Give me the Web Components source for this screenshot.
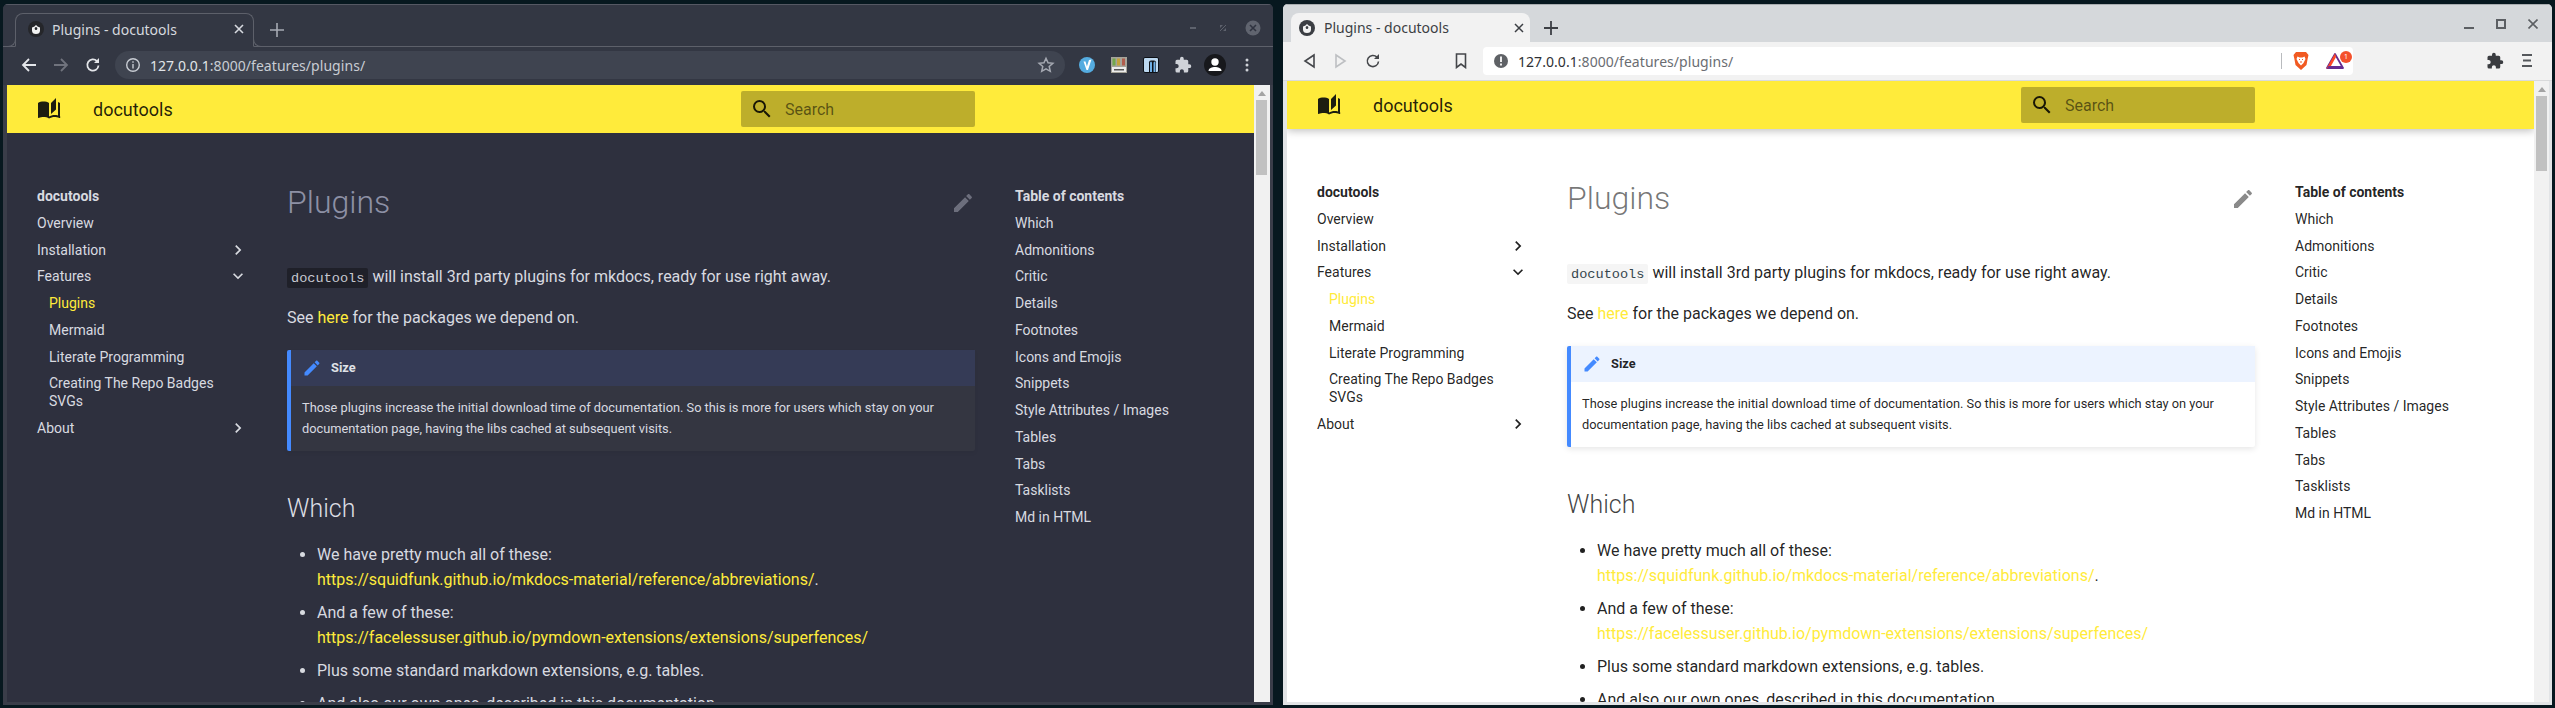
<!doctype html>
<html>
<head>
<meta charset="utf-8">
<title>Plugins - docutools</title>
<style>
  html, body { margin: 0; height: 100%; background: #07181f; overflow: hidden; }
  body { position: relative; width: 2555px; height: 708px; font-family: Roboto, sans-serif; }
</style>
</head>
<body>

<browser-window theme="dark" style="left:3px;top:4px;width:1270px;height:701px">
  <chrome-bar theme="dark"></chrome-bar>
  <docs-page theme="dark"></docs-page>
</browser-window>

<browser-window theme="light" style="left:1283px;top:4px;width:1269px;height:701px">
  <chrome-bar theme="light"></chrome-bar>
  <docs-page theme="light"></docs-page>
</browser-window>

<script>
const ICONS = {
  book: 'M19 1l-5 5v11l5-4.5V1M1 6v14.6c0 .25.25.5.5.5.1 0 .15-.07.25-.07C3.1 20.4 5.05 20 6.5 20c1.95 0 4.05.4 5.5 1.5V6c-1.45-1.1-3.55-1.5-5.5-1.5S2.45 4.9 1 6m22 13.5V6c-.6-.45-1.25-.75-2-1v13.5c-1.1-.35-2.3-.5-3.5-.5-1.7 0-4.15.65-5.5 1.5v2c1.35-.85 3.8-1.5 5.5-1.5 1.65 0 3.35.3 4.75 1.05.1.05.15.05.25.05h.25c.25 0 .5-.25.5-.5v-1.1z',
  search: 'M9.5 3A6.5 6.5 0 0 1 16 9.5c0 1.61-.59 3.09-1.56 4.23l.27.27h.79l5 5-1.5 1.5-5-5v-.79l-.27-.27A6.516 6.516 0 0 1 9.5 16 6.5 6.5 0 0 1 3 9.5 6.5 6.5 0 0 1 9.5 3m0 2C7 5 5 7 5 9.5S7 14 9.5 14 14 12 14 9.5 12 5 9.5 5z',
  pencil: 'M20.71 7.04c.39-.39.39-1.04 0-1.41l-2.34-2.34c-.37-.39-1.02-.39-1.41 0l-1.84 1.83 3.75 3.75M3 17.25V21h3.75L17.81 9.93l-3.75-3.75L3 17.25z',
  right: 'M8.59 16.58L13.17 12 8.59 7.41 10 6l6 6-6 6z',
  down: 'M7.41 8.58L12 13.17l4.59-4.59L18 10l-6 6-6-6z',
  puzzle: 'M20.5 11H19V7a2 2 0 0 0-2-2h-4V3.5a2.5 2.5 0 0 0-5 0V5H4a2 2 0 0 0-2 2v3.8h1.5c1.5 0 2.7 1.2 2.7 2.7S5 16.2 3.5 16.2H2V20a2 2 0 0 0 2 2h3.8v-1.5c0-1.5 1.2-2.7 2.7-2.7s2.7 1.2 2.7 2.7V22H17a2 2 0 0 0 2-2v-4h1.5a2.5 2.5 0 0 0 0-5z'
};
const svg = (name, size, fill) =>
  `<svg width="${size}" height="${size}" viewBox="0 0 24 24" fill="${fill || 'currentColor'}"><path d="${ICONS[name]}"/></svg>`;
const favicon = (bg, fg) =>
  `<svg width="16" height="16" viewBox="0 0 16 16"><circle cx="8" cy="8" r="8" fill="${bg}"/><path d="M4 6.5l2.500-1Q8 3 9.500 5.500l2.500 1v3Q12 13 8 13t-4-3.500z" fill="${fg}"/><ellipse cx="8" cy="7.500" rx="1.300" ry="1.500" fill="${bg}"/></svg>`;

class BrowserWindow extends HTMLElement {
  constructor() {
    super();
    this.attachShadow({ mode: 'open' });
    const dark = this.getAttribute('theme') === 'dark';
    this.shadowRoot.innerHTML = `
      <style>
        :host { position: absolute; display: flex; flex-direction: column; overflow: hidden;
                box-sizing: border-box; border-radius: 5px 5px 0 0;
                background: ${dark ? '#3a3d49' : '#e2e4e6'};
                padding: 0 3px 3px 4px; }
      </style>
      <slot></slot>`;
  }
}

class ChromeBar extends HTMLElement {
  constructor() {
    super();
    this.attachShadow({ mode: 'open' });
    this.dark = this.getAttribute('theme') === 'dark';
    this.render();
  }

  render() {
    const dark = this.dark;
    const fg = dark ? '#e4e6ea' : '#45474b';
    const line = '#5d606a';
    const chrome = dark ? '#333743' : '#d5d8db';
    this.shadowRoot.innerHTML = `
      <style>
        :host { display: block; margin: 0 -3px 0 -4px; font-family: "Noto Sans", "Open Sans", sans-serif; flex: none; }
        .strip { height: ${dark ? 43 : 38}px; box-sizing: border-box; position: relative; padding-top: 9px; padding-left: ${dark ? 12 : 8}px;
                 display: flex; background: ${chrome}; box-shadow: inset 0 1px ${dark ? '#555863' : '#a9adb0'};
                 ${dark ? `border-bottom: 1px solid ${line};` : ''} }
        .tab { box-sizing: border-box; width: 239px; height: ${dark ? 34 : 29}px; display: flex; align-items: center; position: relative;
               font-size: 14px; color: ${dark ? '#d6d9df' : '#3c3f44'};
               background: ${dark ? '#333743' : '#f2f2f2'}; border-radius: 8px 8px 0 0;
               ${dark ? `border: 1px solid ${line}; border-bottom-color: #333743;` : ''}
               padding: ${dark ? '0 8px 2px 12px' : '0 5px 0 8px'}; }
        ${dark ? `
        .tab::before, .tab::after { content: ""; position: absolute; bottom: -1px; width: 8px; height: 8px; border-bottom: 1px solid ${line}; }
        .tab::before { left: -9px; border-right: 1px solid ${line}; border-bottom-right-radius: 8px; }
        .tab::after { right: -9px; border-left: 1px solid ${line}; border-bottom-left-radius: 8px; }` : ''}
        .tab .fav { flex: none; margin-right: ${dark ? 8 : 9}px; display: flex; }
        .tab .title { flex: 1; white-space: nowrap; }
        .tab .x { flex: none; display: flex; }
        .plus { width: 24px; margin-left: ${dark ? 11 : 9}px; height: ${dark ? 34 : 29}px; display: flex; align-items: center; justify-content: center; color: ${dark ? '#a7abb4' : '#3c3f44'}; }
        .controls { position: absolute; top: 0; right: 0; height: 100%; box-sizing: border-box; display: flex; align-items: center; }
        .bar { height: ${dark ? 38 : 39}px; box-sizing: border-box; display: flex; align-items: center; position: relative;
               background: ${dark ? '#333743' : '#f2f2f2'}; ${dark ? 'padding-bottom: 2px;' : 'border-bottom: 1px solid #d9dadb;'} }
        .nav { display: flex; color: ${fg}; }
        .nav span { width: 32px; display: flex; justify-content: center; }
        .omni { height: 28px; border-radius: ${dark ? 14 : 4}px; display: flex; align-items: center; box-sizing: border-box;
                background: ${dark ? '#3f4450' : '#ffffff'}; font-size: 14px; color: ${dark ? '#c8ccd3' : '#6a6d72'}; }
        .url { letter-spacing: .05px; }
        .url b { font-weight: 400; color: ${dark ? '#e1e4e8' : '#2e3034'}; }
        .ic { display: flex; flex: none; }
        .slot { display: flex; flex: none; width: 32px; justify-content: center; }
      </style>
      ${dark ? this.darkMarkup() : this.lightMarkup()}`;
  }

  darkMarkup() {
    return `
      <div class="strip">
        <div class="tab">
          <span class="fav">${favicon('#25262a', '#f2f2f2')}</span>
          <span class="title">Plugins - docutools</span>
          <span class="x"><svg width="12" height="12" viewBox="0 0 12 12" stroke="#d6d9df" stroke-width="1.6"><path d="M2 2l8 8M10 2l-8 8"/></svg></span>
        </div>
        <span class="plus"><svg width="14" height="14" viewBox="0 0 14 14" stroke="currentColor" stroke-width="1.6"><path d="M7 0v14M0 7h14"/></svg></span>
        <div class="controls" style="padding:5px 12px 0 0">
          <svg width="10" height="10" viewBox="0 0 10 10"><rect x="2" y="4" width="6" height="2" fill="#5e626d"/></svg>
          <svg width="10" height="10" viewBox="0 0 10 10" style="margin-left:20px"><path d="M2 5V2h3zM8 5v3H5z" fill="#5e626d"/><path d="M2 8l6-6" stroke="#5e626d"/></svg>
          <svg width="16" height="16" viewBox="0 0 16 16" style="margin-left:17px"><circle cx="8" cy="8" r="7.500" fill="#60646f"/><path d="M5 5l6 6M11 5l-6 6" stroke="#2f3340" stroke-width="1.600"/></svg>
        </div>
      </div>
      <div class="bar">
        <div class="nav" style="margin-left:10px">
          <span><svg width="16" height="16" viewBox="0 0 16 16" fill="none" stroke="#e4e6ea" stroke-width="1.800"><path d="M15 8H2M8 2L2 8l6 6"/></svg></span>
          <span><svg width="16" height="16" viewBox="0 0 16 16" fill="none" stroke="#70737d" stroke-width="1.800"><path d="M1 8h13M8 2l6 6-6 6"/></svg></span>
          <span><svg width="16" height="16" viewBox="0 0 16 16" fill="none" stroke="#e4e6ea" stroke-width="1.800"><path d="M13.500 8.500a5.600 5.600 0 1 1-1.600-4.400"/><path d="M14 1v5h-5" fill="#e4e6ea" stroke="none"/></svg></span>
        </div>
        <div class="omni" style="margin-left:6px;width:950px;padding-left:10px;position:relative">
          <span class="ic" style="margin-right:9px"><svg width="16" height="16" viewBox="0 0 16 16" fill="none" stroke="#c8ccd3" stroke-width="1.400"><circle cx="8" cy="8" r="6.300"/><path d="M8 7v4.500M8 4.200v1.600"/></svg></span>
          <span class="url"><b>127.0.0.1</b>:8000/features/plugins/</span>
          <span class="ic" style="position:absolute;right:10px;top:5px"><svg width="18" height="18" viewBox="0 0 24 24" fill="none" stroke="#a4a8b1" stroke-width="2"><path d="M12 3l2.700 6 6.500.7-4.900 4.300 1.400 6.400L12 17.100l-5.700 3.300 1.400-6.400-4.900-4.300 6.500-.7z"/></svg></span>
        </div>
        <span class="slot" style="margin-left:6px"><svg width="16" height="16" viewBox="0 0 16 16"><circle cx="8" cy="8" r="8" fill="#55ace0"/><path d="M4.500 4.500L7.500 13l1.500 0L12.500 2.500 10 3 7.900 9.500 6.500 4.500z" fill="#fff"/></svg></span>
        <span class="slot"><svg width="16" height="16" viewBox="0 0 16 16"><rect width="16" height="16" fill="#a6a49a"/><rect x="1.500" y="1.500" width="3" height="7" fill="#72a84a"/><rect x="6" y="1.500" width="3" height="7" fill="#c4a23a"/><rect x="11" y="1.500" width="3" height="7" fill="#b05c4c"/><rect x="1" y="10" width="14" height="5" fill="#ececec"/><rect x="3" y="12" width="10" height="1.500" fill="#555"/></svg></span>
        <span class="slot"><svg width="16" height="16" viewBox="0 0 16 16"><rect x=".5" y=".5" width="15" height="15" rx="1.500" fill="#bcd8f0" stroke="#0d1016"/><path d="M6 15V5.500q0-2 2-2h3q2 0 2 2V15z" fill="#101318"/><path d="M7 15V6q0-1.500 1-1.500T9 6v9zM10.500 15V6q0-1.500 1-1.500t1 1.500v9z" fill="#6fb0e6"/></svg></span>
        <span class="slot" style="color:#cfd2d8">${svg('puzzle', 18)}</span>
        <span class="slot"><svg width="22" height="22" viewBox="0 0 22 22"><circle cx="11" cy="11" r="11" fill="#17181c"/><circle cx="11" cy="8" r="3.700" fill="#fff"/><path d="M4.500 17c0-3 3.500-4 6.500-4s6.500 1 6.500 4z" fill="#fff"/></svg></span>
        <span class="slot"><svg width="4" height="16" viewBox="0 0 4 16" fill="#cfd2d8"><circle cx="2" cy="3" r="1.500"/><circle cx="2" cy="8" r="1.500"/><circle cx="2" cy="13" r="1.500"/></svg></span>
      </div>`;
  }

  lightMarkup() {
    return `
      <div class="strip">
        <div class="tab">
          <span class="fav">${favicon('#3b3e43', '#f2f2f2')}</span>
          <span class="title">Plugins - docutools</span>
          <span class="x"><svg width="12" height="12" viewBox="0 0 12 12" stroke="#3c3f44" stroke-width="1.500"><path d="M2 2l8 8M10 2l-8 8"/></svg></span>
        </div>
        <span class="plus"><svg width="14" height="14" viewBox="0 0 14 14" stroke="currentColor" stroke-width="1.800"><path d="M7 0v14M0 7h14"/></svg></span>
        <div class="controls" style="padding:2px 14px 0 0">
          <svg width="10" height="10" viewBox="0 0 10 10"><rect y="8" width="10" height="2" fill="#5c5f63"/></svg>
          <svg width="10" height="10" viewBox="0 0 10 10" style="margin-left:22px"><rect x="1" y="1" width="8" height="8" fill="none" stroke="#5c5f63" stroke-width="2"/></svg>
          <svg width="10" height="10" viewBox="0 0 10 10" style="margin-left:22px" stroke="#5c5f63" stroke-width="1.600"><path d="M.5.5l9 9M9.500.5l-9 9"/></svg>
        </div>
      </div>
      <div class="bar">
        <div class="nav" style="margin-left:10px;color:#45474b">
          <span><svg width="14" height="16" viewBox="0 0 14 16" fill="none" stroke="#45474b" stroke-width="1.600"><path d="M12 2L3 8l9 6z"/></svg></span>
          <span><svg width="14" height="16" viewBox="0 0 14 16" fill="none" stroke="#bdbfc2" stroke-width="1.600"><path d="M2 2l9 6-9 6z"/></svg></span>
          <span><svg width="16" height="16" viewBox="0 0 16 16" fill="none" stroke="#45474b" stroke-width="1.600"><path d="M13.500 8.500a5.600 5.600 0 1 1-1.600-4.400"/><path d="M14 1v5h-5" fill="#45474b" stroke="none"/></svg></span>
        </div>
        <span class="ic" style="margin-left:66px"><svg width="12" height="16" viewBox="0 0 12 16" fill="none" stroke="#45474b" stroke-width="1.600"><path d="M1.500 1h9v13.500L6 11l-4.500 3.500z"/></svg></span>
        <div class="omni" style="margin-left:16px;width:870px;padding-left:10px;position:relative">
          <span class="ic" style="margin-right:9px"><svg width="16" height="16" viewBox="0 0 16 16"><circle cx="8" cy="8" r="7" fill="#5f6266"/><path d="M8 3.500v5.500M8 10.500v2" stroke="#fff" stroke-width="1.800"/></svg></span>
          <span class="url"><b>127.0.0.1</b>:8000/features/plugins/</span>
          <span style="position:absolute;left:798px;top:6px;width:1px;height:16px;background:#b9bbbe"></span>
          <span class="ic" style="position:absolute;left:810px;top:5px"><svg width="16" height="18" viewBox="0 0 16 18"><path d="M3 0h10l2.500 3-.7 3-1.300 7L8 18l-5.500-5-1.300-7L.5 3z" fill="#f15a22"/><path d="M4.500 4.500l2 1h3l2-1 1 2.500-2 4L8 13.500 5.500 11l-2-4z" fill="#fff"/><path d="M6 7.500h1M9 7.500h1M8 9v2" stroke="#f15a22"/></svg></span>
          <span class="ic" style="position:absolute;left:843px;top:6px"><svg width="18" height="16" viewBox="0 0 18 16"><path d="M9 1l8 14H1z" fill="#fff" stroke="#662d91" stroke-width="1.800" stroke-linejoin="round"/><path d="M9 .5L.5 15.500h3L10 4z" fill="#ff4724"/><path d="M1 15.800h16l-1.500-2.800h-13z" fill="#662d91"/></svg></span>
          <span style="position:absolute;left:857px;top:4px;width:12px;height:12px;border-radius:50%;background:#f4512c;color:#fff;font-size:7px;line-height:12px;text-align:center">1</span>
        </div>
        <span class="ic" style="position:absolute;left:1203px;top:10px;color:#3a3c40">${svg('puzzle', 18)}</span>
        <span class="ic" style="position:absolute;left:1239px;top:12px"><svg width="10" height="13" viewBox="0 0 10 13" fill="#55585c"><rect width="10" height="2"/><rect x="1" y="5.500" width="8" height="2"/><rect y="11" width="10" height="2"/></svg></span>
      </div>`;
  }
}

class SiteHeader extends HTMLElement {
  constructor() {
    super();
    this.attachShadow({ mode: 'open' });
    this.shadowRoot.innerHTML = `
      <style>
        :host { display: flex; align-items: center; height: 48px; background: #ffeb3b; color: #1d1d10; flex: none;
                position: relative; z-index: 1; }
        :host([theme=light]) { box-shadow: 0 2px 8px rgba(0,0,0,.25); }
        .logo { display: flex; margin-left: 30px; }
        .name { margin-left: 32px; font-size: 18px; width: 648px; color: rgba(0,0,0,.87); }
        .search { box-sizing: border-box; width: 234px; height: 36px; border-radius: 2px; background: rgba(0,0,0,.26);
                  display: flex; align-items: center; padding-left: 9px; font-size: 16px; color: rgba(0,0,0,.54); }
        .search svg { margin-right: 11px; color: rgba(0,0,0,.87); }
      </style>
      <span class="logo">${svg('book', 24)}</span>
      <span class="name">docutools</span>
      <div class="search">${svg('search', 24)}<span>Search</span></div>`;
  }
}

class SideNav extends HTMLElement {
  constructor() {
    super();
    this.attachShadow({ mode: 'open' });
    const rows = [
      ['Overview'], ['Installation', 'right'], ['Features', 'down'],
      ['Plugins', '', 'sub on'], ['Mermaid', '', 'sub'], ['Literate Programming', '', 'sub'],
      ['Creating The Repo Badges SVGs', '', 'sub'], ['About', 'right']
    ];
    this.shadowRoot.innerHTML = `
      <style>
        :host { display: block; font-size: 14px; line-height: 18.2px; padding: 54px 0 0 30px; }
        .head { font-weight: 700; }
        .row { margin-top: 8.55px; display: flex; justify-content: space-between; width: 211px; position: relative; }
        .row.sub { margin-left: 12px; width: 189px; }
        .row.on { color: var(--link); }
        .row svg { position: absolute; right: 0; top: -1px; }
      </style>
      <div class="head">docutools</div>
      ${rows.map(([t, i, c]) => `<div class="row ${c || ''}"><span>${t}</span>${i ? svg(i, 20) : ''}</div>`).join('')}`;
  }
}

class TocNav extends HTMLElement {
  constructor() {
    super();
    this.attachShadow({ mode: 'open' });
    const rows = ['Which', 'Admonitions', 'Critic', 'Details', 'Footnotes', 'Icons and Emojis', 'Snippets',
      'Style Attributes / Images', 'Tables', 'Tabs', 'Tasklists', 'Md in HTML'];
    this.shadowRoot.innerHTML = `
      <style>
        :host { display: block; font-size: 14px; line-height: 18.2px; padding: 54px 0 0 40px; }
        .head { font-weight: 700; }
        .row { margin-top: 8.55px; }
      </style>
      <div class="head">Table of contents</div>
      ${rows.map(t => `<div class="row">${t}</div>`).join('')}`;
  }
}

class NoteBox extends HTMLElement {
  constructor() {
    super();
    this.attachShadow({ mode: 'open' });
    this.shadowRoot.innerHTML = `
      <style>
        :host { display: block; box-sizing: border-box; font-size: 12.8px; line-height: 20.48px; border-left: 4px solid #448aff;
                border-radius: 2px; background: var(--note-bg); box-shadow: var(--note-shadow); }
        .title { height: 36px; display: flex; align-items: center; background: var(--note-title); font-weight: 700; padding-left: 40px; position: relative; color: var(--note-head); }
        .title svg { position: absolute; left: 11px; top: 8px; color: #448aff; }
        .body { padding: 12px 11px 12px 11px; }
      </style>
      <div class="title">${svg('pencil', 20)}<slot name="title"></slot></div>
      <div class="body"><slot></slot></div>`;
  }
}

class DocsPage extends HTMLElement {
  constructor() {
    super();
    this.attachShadow({ mode: 'open' });
    const theme = this.getAttribute('theme');
    const dark = theme === 'dark';
    this.shadowRoot.innerHTML = `
      <style>
        :host { display: flex; flex: 1; min-height: 0; overflow: hidden; font-family: Roboto, sans-serif; position: relative;
                --link: #ffeb3b;
                --note-bg: ${dark ? '#343641' : '#ffffff'};
                --note-title: ${dark ? '#353b56' : '#ecf3ff'};
                --note-head: ${dark ? '#dfe1e6' : 'rgba(0,0,0,.87)'};
                --note-shadow: ${dark ? '0 2px 4px rgba(0,0,0,.05)' : '0 2px 6px rgba(0,0,0,.1)'};
                background: ${dark ? '#2e303e' : '#ffffff'};
                color: ${dark ? '#d8dae0' : 'rgba(0,0,0,.87)'}; }
        .view { flex: 1; min-width: 0; display: flex; flex-direction: column; overflow: hidden; }
        .cols { display: grid; grid-template-columns: 280px 688px 1fr; }
        article { font-size: 16px; line-height: 25px; position: relative; padding-top: 49px; }
        h1 { margin: 0; font-size: 32px; font-weight: 300; line-height: 41.6px; color: ${dark ? '#8d90a5' : 'rgba(0,0,0,.54)'}; }
        h2 { margin: 39.5px 0 16px; font-size: 25px; font-weight: 300; line-height: 35px; color: ${dark ? '#dcdee4' : 'rgba(0,0,0,.75)'}; }
        p { margin: 0 0 16px; }
        p.first { margin-top: 40px; }
        code { font-family: "Liberation Mono", monospace; font-size: 13.6px; line-height: 1; background: ${dark ? '#1f2029' : '#f5f5f5'}; color: ${dark ? '#c6c8d0' : '#36464e'};
               padding: 2.5px 4px; border-radius: 2px; }
        a { color: var(--link); text-decoration: none; }
        ul { margin: 0; padding: 0 0 0 30px; }
        li { margin-bottom: 8px; }
        .edit { position: absolute; right: 0; top: 58px; display: flex; color: ${dark ? '#6c6e7c' : '#8a8a8a'}; }
        note-box { margin-top: 20.5px; }
        .scroll { width: ${dark ? 16 : 15}px; flex: none; background: #f1f1f1; position: relative; }
        .scroll .up { position: absolute; left: ${dark ? 4 : 3.5}px; top: 6px; width: 0; height: 0; border: 4px solid transparent; border-top: 0; border-bottom: 5px solid #a3a3a3; }
        .scroll .thumb { position: absolute; left: 2px; right: ${dark ? 3 : 2}px; top: 15px; height: 75px; background: #c1c1c1; }
      </style>
      <div class="view">
        <site-header theme="${theme}"></site-header>
        <div class="cols">
          <side-nav></side-nav>
          <article>
            <span class="edit">${svg('pencil', 24)}</span>
            <h1>Plugins</h1>
            <p class="first"><code>docutools</code> will install 3rd party plugins for mkdocs, ready for use right away.</p>
            <p style="margin:0">See <a>here</a> for the packages we depend on.</p>
            <note-box>
              <span slot="title">Size</span>
              Those plugins increase the initial download time of documentation. So this is more for users which stay on your documentation page, having the libs cached at subsequent visits.
            </note-box>
            <h2>Which</h2>
            <ul>
              <li>We have pretty much all of these:<br><a>https://squidfunk.github.io/mkdocs-material/reference/abbreviations/</a>.</li>
              <li>And a few of these:<br><a>https://facelessuser.github.io/pymdown-extensions/extensions/superfences/</a></li>
              <li>Plus some standard markdown extensions, e.g. tables.</li>
              <li>And also our own ones, described in this documentation.</li>
            </ul>
          </article>
          <toc-nav></toc-nav>
        </div>
      </div>
      <div class="scroll"><span class="up"></span><span class="thumb"></span></div>`;
  }
}

customElements.define('site-header', SiteHeader);
customElements.define('side-nav', SideNav);
customElements.define('toc-nav', TocNav);
customElements.define('note-box', NoteBox);
customElements.define('docs-page', DocsPage);
customElements.define('chrome-bar', ChromeBar);
customElements.define('browser-window', BrowserWindow);
</script>
</body>
</html>
